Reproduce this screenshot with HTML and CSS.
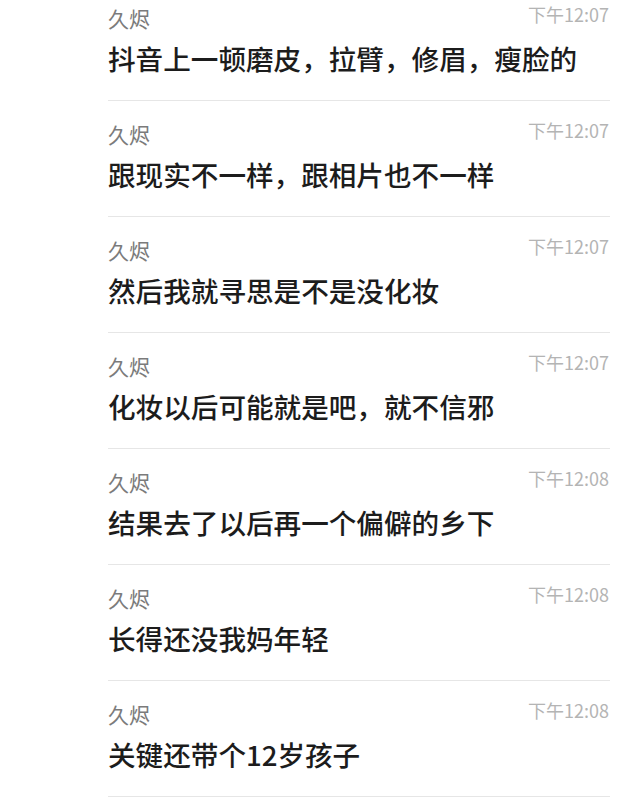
FILE: index.html
```html
<!DOCTYPE html>
<html lang="zh-CN">
<head>
  <meta charset="UTF-8">
  <meta name="viewport" content="width=device-width, initial-scale=1.0">
  <title>聊天记录</title>
  <link rel="stylesheet" href="styles.css">
</head>
<body>

  <!-- Chat history -->
  <main class="chat-list">
    <div class="msg">
      <div class="msg-head">
        <span class="msg-name">久烬</span>
        <span class="msg-time">下午12:07</span>
      </div>
      <p class="msg-text">抖音上一顿磨皮，拉臂，修眉，瘦脸的</p>
    </div>
    <div class="msg">
      <div class="msg-head">
        <span class="msg-name">久烬</span>
        <span class="msg-time">下午12:07</span>
      </div>
      <p class="msg-text">跟现实不一样，跟相片也不一样</p>
    </div>
    <div class="msg">
      <div class="msg-head">
        <span class="msg-name">久烬</span>
        <span class="msg-time">下午12:07</span>
      </div>
      <p class="msg-text">然后我就寻思是不是没化妆</p>
    </div>
    <div class="msg">
      <div class="msg-head">
        <span class="msg-name">久烬</span>
        <span class="msg-time">下午12:07</span>
      </div>
      <p class="msg-text">化妆以后可能就是吧，就不信邪</p>
    </div>
    <div class="msg">
      <div class="msg-head">
        <span class="msg-name">久烬</span>
        <span class="msg-time">下午12:08</span>
      </div>
      <p class="msg-text">结果去了以后再一个偏僻的乡下</p>
    </div>
    <div class="msg">
      <div class="msg-head">
        <span class="msg-name">久烬</span>
        <span class="msg-time">下午12:08</span>
      </div>
      <p class="msg-text">长得还没我妈年轻</p>
    </div>
    <div class="msg">
      <div class="msg-head">
        <span class="msg-name">久烬</span>
        <span class="msg-time">下午12:08</span>
      </div>
      <p class="msg-text">关键还带个12岁孩子</p>
    </div>
  </main>

</body>
</html>
```

FILE: styles.css
```css
/* General Styling */
* {
  margin: 0;
  padding: 0;
  box-sizing: border-box;
  font-family: "Noto Sans CJK SC", "Noto Sans", sans-serif;
}

body {
  background-color: #ffffff;
  overflow: hidden;
}

/* Chat list */
.chat-list {
  margin-top: -15px;
  padding-left: 108px;
  padding-right: 27px;
}

.msg {
  padding: 23px 0 28px;
  border-bottom: 1px solid #e6e6e6;
}

.msg-head {
  display: flex;
  justify-content: space-between;
  align-items: flex-start;
}

.msg-name {
  font-size: 21px;
  line-height: 21px;
  color: #7b7b7b;
}

.msg-time {
  font-size: 18px;
  line-height: 18px;
  color: #b4b4b4;
  margin-top: -3px;
  margin-right: 1px;
}

.msg-text {
  margin-top: 15px;
  font-size: 27.6px;
  line-height: 28px;
  font-weight: 500;
  color: #1c1c1c;
}
```
